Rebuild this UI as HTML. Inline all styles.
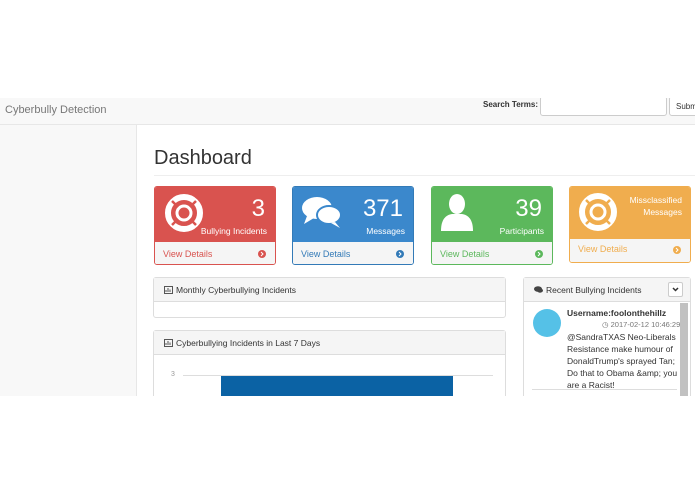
<!DOCTYPE html>
<html><head><meta charset="utf-8"><style>
*{box-sizing:border-box;margin:0;padding:0}
body{width:695px;height:494px;background:#fff;font-family:"Liberation Sans",sans-serif;position:relative;overflow:hidden;color:#333}
.a{position:absolute}
.clip{position:absolute;left:0;top:98px;width:695px;height:298px;overflow:hidden}
.nav{left:0;top:0;width:695px;height:27px;background:#f8f8f8;border-bottom:1px solid #e7e7e7}
.side{left:0;top:27px;width:137px;height:300px;background:#f8f8f8;border-right:1px solid #e7e7e7}
.card{border-radius:3px;overflow:hidden;border:1px solid}
.card .top{height:55px;position:relative;color:#fff}
.card .ft{height:24px;background:#f5f5f5;font-size:9px;padding:7px 8px;position:relative}
.num{position:absolute;right:10px;top:8px;font-size:24px}
.lbl{position:absolute;right:8px;top:39px;font-size:8.5px}
.panel{border:1px solid #ddd;border-radius:3px;background:#fff}
.ph{background:#f5f5f5;border-bottom:1px solid #ddd;height:24px;font-size:8.5px;padding:7px 10px;color:#333}
</style></head><body>
<div class="clip">
<div class="a nav"></div>
<div class="a" style="left:5px;top:6px;font-size:11px;color:#777">Cyberbully Detection</div>
<div class="a" style="left:483px;top:2px;font-size:8px;font-weight:bold">Search Terms:</div>
<div class="a" style="left:540px;top:-2px;width:127px;height:20px;border:1px solid #ccc;border-radius:3px;background:#fff"></div>
<div class="a" style="left:669px;top:-2px;width:40px;height:20px;border:1px solid #ccc;border-radius:3px;background:#fff;font-size:8px;padding:5px 6px">Submit</div>
<div class="a side"></div>
<div class="a" style="left:154px;top:49px;font-size:20px;color:#333">Dashboard</div>
<div class="a" style="left:154px;top:77px;width:541px;border-top:1px solid #eee"></div>

<!-- red -->
<div class="a card" style="left:154px;top:88px;width:122px;height:79px;border-color:#d9534f">
<div class="top" style="background:#d9534f">
<svg class="a" style="left:9px;top:6px" width="40" height="40" viewBox="0 0 40 40"><circle cx="20" cy="20" r="16" fill="none" stroke="#fff" stroke-width="6"/><circle cx="20" cy="20" r="7" fill="none" stroke="#fff" stroke-width="3"/><g stroke="#d9534f" stroke-width="2.5"><line x1="8" y1="8" x2="14" y2="14"/><line x1="32" y1="8" x2="26" y2="14"/><line x1="8" y1="32" x2="14" y2="26"/><line x1="32" y1="32" x2="26" y2="26"/></g></svg>
<div class="num">3</div><div class="lbl">Bullying Incidents</div></div>
<div class="ft" style="color:#d9534f">View Details<svg class="a" style="right:9px;top:8px" width="8" height="8"><circle cx="4" cy="4" r="4" fill="#d9534f"/><path d="M3 2l2 2-2 2" stroke="#fff" fill="none"/></svg></div></div>

<!-- blue -->
<div class="a card" style="left:292px;top:88px;width:122px;height:79px;border-color:#337ab7">
<div class="top" style="background:#3b88cc">
<svg class="a" style="left:8px;top:8px" width="42" height="36" viewBox="0 0 42 36"><ellipse cx="16" cy="13" rx="15" ry="11" fill="#fff"/><path d="M6 21 L3 29 L13 23Z" fill="#fff"/><ellipse cx="28" cy="20" rx="12" ry="9" fill="#fff" stroke="#3b88cc" stroke-width="2"/><path d="M34 27 L39 33 L30 28Z" fill="#fff"/></svg>
<div class="num">371</div><div class="lbl">Messages</div></div>
<div class="ft" style="color:#337ab7">View Details<svg class="a" style="right:9px;top:8px" width="8" height="8"><circle cx="4" cy="4" r="4" fill="#337ab7"/><path d="M3 2l2 2-2 2" stroke="#fff" fill="none"/></svg></div></div>

<!-- green -->
<div class="a card" style="left:431px;top:88px;width:122px;height:79px;border-color:#5cb85c">
<div class="top" style="background:#5cb85c">
<svg class="a" style="left:8px;top:6px" width="34" height="40" viewBox="0 0 34 40"><ellipse cx="17" cy="11" rx="8" ry="10" fill="#fff"/><path d="M1 38 C1 26 6 22 12 21 L22 21 C28 22 33 26 33 38Z" fill="#fff"/></svg>
<div class="num">39</div><div class="lbl">Participants</div></div>
<div class="ft" style="color:#5cb85c">View Details<svg class="a" style="right:9px;top:8px" width="8" height="8"><circle cx="4" cy="4" r="4" fill="#5cb85c"/><path d="M3 2l2 2-2 2" stroke="#fff" fill="none"/></svg></div></div>

<!-- orange -->
<div class="a card" style="left:569px;top:88px;width:122px;height:77px;border-color:#f0ad4e">
<div class="top" style="background:#f0ad4e;height:52px">
<svg class="a" style="left:8px;top:5px" width="40" height="40" viewBox="0 0 40 40"><circle cx="20" cy="20" r="16" fill="none" stroke="#fff" stroke-width="6"/><circle cx="20" cy="20" r="7" fill="none" stroke="#fff" stroke-width="3"/><g stroke="#f0ad4e" stroke-width="2.5"><line x1="8" y1="8" x2="14" y2="14"/><line x1="32" y1="8" x2="26" y2="14"/><line x1="8" y1="32" x2="14" y2="26"/><line x1="32" y1="32" x2="26" y2="26"/></g></svg>
<div class="a" style="right:8px;top:7px;font-size:8.5px;text-align:right;line-height:12px">Missclassified<br>Messages</div></div>
<div class="ft" style="color:#f0ad4e;padding-top:5px">View Details<svg class="a" style="right:9px;top:7px" width="8" height="8"><circle cx="4" cy="4" r="4" fill="#f0ad4e"/><path d="M3 2l2 2-2 2" stroke="#fff" fill="none"/></svg></div></div>

<!-- monthly -->
<div class="a panel" style="left:153px;top:179px;width:353px;height:41px">
<div class="ph"><svg width="9" height="8" style="vertical-align:-1px;margin-right:3px"><rect x=".5" y=".5" width="8" height="7" fill="none" stroke="#555"/><path d="M2 6V4M4 6V2M6 6V3.5" stroke="#555"/></svg>Monthly Cyberbullying Incidents</div></div>

<!-- 7 days -->
<div class="a panel" style="left:153px;top:232px;width:353px;height:100px">
<div class="ph"><svg width="9" height="8" style="vertical-align:-1px;margin-right:3px"><rect x=".5" y=".5" width="8" height="7" fill="none" stroke="#555"/><path d="M2 6V4M4 6V2M6 6V3.5" stroke="#555"/></svg>Cyberbullying Incidents in Last 7 Days</div>
<div class="a" style="left:17px;top:40px;font-size:7px;color:#999">3</div>
<div class="a" style="left:29px;top:44px;width:310px;border-top:1px solid #ddd"></div>
<div class="a" style="left:67px;top:45px;width:232px;height:60px;background:#0b62a4"></div>
</div>

<!-- recent -->
<div class="a panel" style="left:523px;top:179px;width:168px;height:140px">
<div class="ph" style="padding-left:10px"><svg width="9" height="7" style="margin-right:3px"><ellipse cx="4" cy="3" rx="4" ry="2.8" fill="#444"/><ellipse cx="6" cy="4.5" rx="3" ry="2.2" fill="#444"/></svg>Recent Bullying Incidents</div>
<div class="a" style="left:144px;top:4px;width:15px;height:15px;border:1px solid #ccc;border-radius:2px;background:#fff"><svg width="13" height="13"><path d="M4 5l2.5 2.5L9 5" stroke="#333" stroke-width="1.5" fill="none"/></svg></div>
<div class="a" style="left:156px;top:25px;width:8px;height:115px;background:#c1c1c1"></div>
<div class="a" style="left:9px;top:31px;width:28px;height:28px;border-radius:50%;background:#55c1e7"></div>
<div class="a" style="left:43px;top:30px;font-size:8.5px;font-weight:bold;color:#333">Username:foolonthehillz</div>
<div class="a" style="left:78px;top:42px;font-size:7.5px;color:#777">&#9719; 2017-02-12 10:46:29</div>
<div class="a" style="left:43px;top:53px;width:112px;font-size:8.5px;line-height:12px;color:#333">@SandraTXAS Neo-Liberals Resistance make humour of DonaldTrump's sprayed Tan; Do that to Obama &amp;amp; you are a Racist!</div>
<div class="a" style="left:8px;top:111px;width:145px;border-top:1px solid #ddd"></div>
</div>
</div>
</body></html>
